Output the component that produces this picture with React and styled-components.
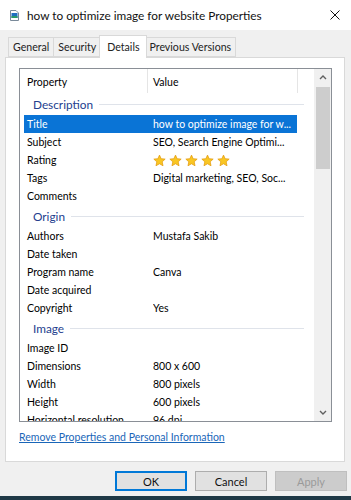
import React from 'react'
import styled, { createGlobalStyle } from 'styled-components'

const GlobalStyle = createGlobalStyle`
  html, body {
    margin: 0;
    padding: 0;
    width: 351px;
    height: 500px;
    overflow: hidden;
    background: #f0f0f0;
  }
  * { box-sizing: border-box; }
`

const sections = [
  {
    name: 'Description',
    rows: [
      { label: 'Title', value: 'how to optimize image for w...', selected: true },
      { label: 'Subject', value: 'SEO, Search Engine Optimi...' },
      { label: 'Rating', stars: 5 },
      { label: 'Tags', value: 'Digital marketing, SEO, Soc...' },
      { label: 'Comments', value: '' },
    ],
  },
  {
    name: 'Origin',
    rows: [
      { label: 'Authors', value: 'Mustafa Sakib' },
      { label: 'Date taken', value: '' },
      { label: 'Program name', value: 'Canva' },
      { label: 'Date acquired', value: '' },
      { label: 'Copyright', value: 'Yes' },
    ],
  },
  {
    name: 'Image',
    rows: [
      { label: 'Image ID', value: '' },
      { label: 'Dimensions', value: '800 x 600' },
      { label: 'Width', value: '800 pixels' },
      { label: 'Height', value: '600 pixels' },
      { label: 'Horizontal resolution', value: '96 dpi' },
    ],
  },
]

const tabs = ['General', 'Security', 'Details', 'Previous Versions']

const FileIcon = () => (
  <svg width="9" height="11" viewBox="0 0 9 11">
    <path d="M0.5 0.5 H6 L8.5 3 V10.5 H0.5 Z" fill="#fff" stroke="#7a8a9a" />
    <rect x="1.5" y="3" width="6" height="5" fill="#1f6fc0" />
    <rect x="1.5" y="6" width="6" height="2" fill="#2a9a6a" />
  </svg>
)

const CloseIcon = () => (
  <svg width="10" height="10" viewBox="0 0 10 10">
    <path d="M0.5 0.5 L9.5 9.5 M9.5 0.5 L0.5 9.5" stroke="#111" strokeWidth="1" />
  </svg>
)

const Chevron = ({ down }) => (
  <svg width="8" height="5" viewBox="0 0 8 5">
    <path
      d={down ? 'M1 1 L4 4 L7 1' : 'M1 4 L4 1 L7 4'}
      fill="none"
      stroke="#606060"
      strokeWidth="1.4"
    />
  </svg>
)

const Star = () => (
  <svg width="13" height="13" viewBox="0 0 14 13">
    <path
      d="M7 0.7 L8.8 4.6 L13.1 5 L9.9 7.9 L10.8 12.2 L7 10 L3.2 12.2 L4.1 7.9 L0.9 5 L5.2 4.6 Z"
      fill="#f9c623"
      stroke="#e29a0c"
      strokeWidth="0.8"
    />
  </svg>
)

const App = () => {
  return (
    <>
      <GlobalStyle />
      <Window>
        <TitleBar>
          <FileIcon />
          <TitleText>how to optimize image for website Properties</TitleText>
          <CloseButton><CloseIcon /></CloseButton>
        </TitleBar>

        <Body>
          <TabRow>
            {tabs.map(t => (
              <Tab key={t} $active={t === 'Details'}>{t}</Tab>
            ))}
          </TabRow>

          <Panel>
            <ListView>
              <ListContent>
                <Header>
                  <HeaderCell $w={128} $pad={7}>Property</HeaderCell>
                  <HeaderCell $w={150} $pad={5}>Value</HeaderCell>
                </Header>
                {sections.map(sec => (
                  <React.Fragment key={sec.name}>
                    <GroupHeader>
                      <GroupName>{sec.name}</GroupName>
                      <GroupLine />
                    </GroupHeader>
                    {sec.rows.map(r => (
                      <Row key={r.label} $selected={r.selected}>
                        <Label>{r.label}</Label>
                        <Value>
                          {r.stars
                            ? <Stars>{Array.from({ length: r.stars }).map((_, i) => <Star key={i} />)}</Stars>
                            : r.value}
                        </Value>
                      </Row>
                    ))}
                  </React.Fragment>
                ))}
              </ListContent>

              <ScrollBar>
                <ScrollArrow><Chevron /></ScrollArrow>
                <Thumb />
                <ScrollSpace />
                <ScrollArrow><Chevron down /></ScrollArrow>
              </ScrollBar>
            </ListView>

            <RemoveLink href="#">Remove Properties and Personal Information</RemoveLink>
          </Panel>

          <ButtonRow>
            <Button $default>OK</Button>
            <Button>Cancel</Button>
            <Button disabled>Apply</Button>
          </ButtonRow>
        </Body>

        <Taskbar />
      </Window>
    </>
  )
}

export default App

const Window = styled.div`
  width: 351px;
  height: 500px;
  display: flex;
  flex-direction: column;
  font-family: Lato, "Liberation Sans", sans-serif;
  color: #000;
`

const TitleBar = styled.div`
  height: 30px;
  flex-shrink: 0;
  background: #fff;
  display: flex;
  align-items: center;
  padding-left: 10px;
`

const TitleText = styled.div`
  margin-left: 8px;
  font-size: 11.8px;
  color: #111;
  white-space: nowrap;
`

const CloseButton = styled.div`
  margin-left: auto;
  margin-right: 11px;
  display: flex;
  align-items: center;
`

const Body = styled.div`
  flex: 1;
  background: #f0f0f0;
  display: flex;
  flex-direction: column;
  padding-top: 5px;
`

const TabRow = styled.div`
  display: flex;
  align-items: flex-end;
  padding-left: 8px;
  height: 22px;
  position: relative;
  z-index: 1;
`

const Tab = styled.div`
  height: ${p => (p.$active ? '23px' : '20px')};
  margin: ${p => (p.$active ? '0 -2px -1px -2px' : '0 0 0 -1px')};
  padding: 0 ${p => (p.$active ? '7px' : '4px')};
  background: ${p => (p.$active ? '#fff' : '#f0f0f0')};
  border: 1px solid #d9d9d9;
  border-bottom: ${p => (p.$active ? 'none' : '1px solid #d9d9d9')};
  font-size: 10.6px;
  display: flex;
  align-items: center;
  position: relative;
  z-index: ${p => (p.$active ? 2 : 1)};
  color: #222;
  &:first-child { margin-left: 0; }
`

const Panel = styled.div`
  margin: 0 6px 0 5px;
  height: 405px;
  background: #fff;
  border: 1px solid #d9d9d9;
  padding: 10px 12px 0 13px;
  display: flex;
  flex-direction: column;
`

const ListView = styled.div`
  height: 354px;
  border: 1px solid #8a8f96;
  display: flex;
  overflow: hidden;
`

const ListContent = styled.div`
  flex: 1;
  overflow: hidden;
  font-size: 10.5px;
`

const Header = styled.div`
  height: 24px;
  display: flex;
`

const HeaderCell = styled.div`
  width: ${p => p.$w}px;
  padding-left: ${p => p.$pad}px;
  border-right: 1px solid #e5e5e5;
  display: flex;
  align-items: center;
  padding-top: 2px;
`

const GroupHeader = styled.div`
  height: 22px;
  display: flex;
  align-items: center;
  padding-left: 13px;
  padding-right: 10px;
  gap: 6px;
`

const GroupName = styled.span`
  color: #23408e;
  font-size: 11.8px;
`

const GroupLine = styled.div`
  flex: 1;
  height: 1px;
  background: #dfe3ea;
`

const Row = styled.div`
  height: 18px;
  width: 273px;
  margin-left: 4px;
  display: flex;
  align-items: center;
  background: ${p => (p.$selected ? '#0a74d6' : 'transparent')};
  color: ${p => (p.$selected ? '#fff' : '#000')};
`

const Label = styled.div`
  width: 129px;
  padding-left: 3px;
  white-space: nowrap;
`

const Value = styled.div`
  flex: 1;
  white-space: nowrap;
  overflow: hidden;
`

const Stars = styled.div`
  display: flex;
  gap: 3px;
  padding-top: 1px;
`

const ScrollBar = styled.div`
  width: 17px;
  flex-shrink: 0;
  background: #f0f0f0;
  display: flex;
  flex-direction: column;
  align-items: center;
`

const ScrollArrow = styled.div`
  height: 17px;
  width: 100%;
  display: flex;
  align-items: center;
  justify-content: center;
`

const Thumb = styled.div`
  width: 14px;
  height: 82px;
  margin-top: 1px;
  background: #cdcdcd;
`

const ScrollSpace = styled.div`
  flex: 1;
`

const RemoveLink = styled.a`
  margin-top: 9px;
  font-size: 10.5px;
  color: #1a66b8;
  text-decoration: underline;
  align-self: flex-start;
`

const ButtonRow = styled.div`
  flex: 1;
  display: flex;
  justify-content: flex-end;
  align-items: flex-start;
  gap: 8px;
  padding: 9px 4px 0 0;
`

const Button = styled.button`
  width: 72px;
  height: 20px;
  font-family: inherit;
  font-size: 11px;
  background: ${p => (p.disabled ? '#cccccc' : '#e1e1e1')};
  color: ${p => (p.disabled ? '#9a9a9a' : '#111')};
  border: 1px solid ${p => (p.$default ? '#0078d7' : p.disabled ? '#bfbfbf' : '#adadad')};
  box-shadow: ${p => (p.$default ? 'inset 0 0 0 1px #0078d7' : 'none')};
  padding: 0;
`

const Taskbar = styled.div`
  height: 4px;
  flex-shrink: 0;
  background: #1f3946;
`
